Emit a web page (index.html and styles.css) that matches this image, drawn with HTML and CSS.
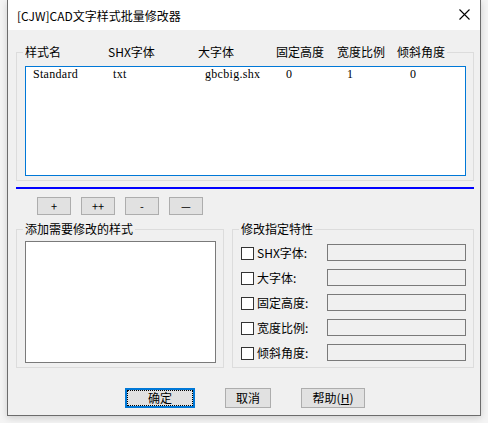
FILE: index.html
```html
<!DOCTYPE html>
<html lang="zh-CN">
<head>
<meta charset="utf-8">
<title>[CJW]CAD文字样式批量修改器</title>
<link rel="stylesheet" href="styles.css">
</head>
<body>
<div class="window">
  <div class="titlebar">
    <span class="title">[CJW]CAD文字样式批量修改器</span>
    <svg class="close" width="11" height="11" viewBox="0 0 11 11"><path d="M0.5 0.5L10.5 10.5M10.5 0.5L0.5 10.5" stroke="#000" stroke-width="1.1" fill="none"/></svg>
  </div>
  <div class="content">
    <fieldset class="group group-top">
      <legend class="legend legend-cols"><span class="h1">样式名</span><span class="h2">SHX字体</span><span class="h3">大字体</span><span class="h4">固定高度</span><span class="h5">宽度比例</span><span class="h6">倾斜角度</span></legend>
      <div class="listbox list-styles">
        <div class="row"><span>Standard</span><span>txt</span><span>gbcbig.shx</span><span>0</span><span>1</span><span>0</span></div>
      </div>
    </fieldset>
    <div class="divider"></div>
    <div class="tool-row">
      <button class="btn btn-small">+</button>
      <button class="btn btn-small">++</button>
      <button class="btn btn-small">-</button>
      <button class="btn btn-small">—</button>
    </div>
    <div class="lower">
      <fieldset class="group group-left">
        <legend class="legend">添加需要修改的样式</legend>
        <div class="listbox list-add"></div>
      </fieldset>
      <fieldset class="group group-right">
        <legend class="legend">修改指定特性</legend>
        <div class="prop-row"><span class="check"></span><span class="prop-label">SHX字体:</span><span class="field"></span></div>
        <div class="prop-row"><span class="check"></span><span class="prop-label">大字体:</span><span class="field"></span></div>
        <div class="prop-row"><span class="check"></span><span class="prop-label">固定高度:</span><span class="field"></span></div>
        <div class="prop-row"><span class="check"></span><span class="prop-label">宽度比例:</span><span class="field"></span></div>
        <div class="prop-row"><span class="check"></span><span class="prop-label">倾斜角度:</span><span class="field"></span></div>
      </fieldset>
    </div>
    <div class="actions">
      <button class="btn btn-default">确定</button>
      <button class="btn btn-cancel">取消</button>
      <button class="btn btn-help">帮助(<u>H</u>)</button>
    </div>
  </div>
</div>
</body>
</html>
```

FILE: styles.css
```css
* { box-sizing: border-box; }
html, body { margin: 0; padding: 0; }
body {
  background: #f4f4f4;
  width: 488px;
  height: 423px;
  overflow: hidden;
  font-family: "Noto Sans CJK SC", "Noto Sans", sans-serif;
  font-size: 12px;
  color: #000;
}
.window {
  margin-left: 7px;
  width: 474px;
  height: 416px;
  border: 1px solid #6c6c6c;
  border-top: none;
  background: #f0f0f0;
  box-shadow: 0 2px 7px rgba(0,0,0,0.16);
  display: flex;
  flex-direction: column;
}
.titlebar {
  height: 30px;
  background: #fff;
  display: flex;
  align-items: center;
  padding-left: 9px;
  padding-right: 10px;
}
.title {
  font-size: 12px;
  line-height: 16px;
  flex: 1;
  padding-top: 1px;
}
.close { display: block; margin-top: -1px; }
.content {
  padding: 14px 6px 0 8px;
  display: flex;
  flex-direction: column;
}
.group {
  margin: 0;
  min-width: 0;
  border: 1px solid #dcdcdc;
}
.legend {
  padding: 0 2px;
  margin-left: -2px;
  line-height: 16px;
  font-size: 12px;
}
.group-top { padding: 6px 7px 4px 8px; }
.legend-cols { display: flex; }
.legend-cols span { display: block; }
.h1 { width: 83px; }
.h2 { width: 90px; }
.h3 { width: 78px; }
.h4 { width: 61px; }
.h5 { width: 60px; }
.h6 { width: 48px; }
.listbox { background: #fff; }
.list-styles {
  height: 110px;
  border: 1px solid #0078d7;
  padding: 0 0 0 7px;
}
.row {
  display: grid;
  grid-template-columns: 80px 92px 81px 61px 63px auto;
  font-family: "Liberation Serif", "DejaVu Serif", serif;
  font-size: 12px;
  letter-spacing: 0.3px;
  line-height: 14px;
}
.divider {
  margin-top: 6px;
  height: 2px;
  background: #0000ff;
}
.tool-row {
  margin-top: 8px;
  padding-left: 21px;
  display: flex;
  gap: 10px;
}
.btn {
  margin: 0;
  padding: 0;
  background: #e1e1e1;
  border: 1px solid #adadad;
  font-family: "Noto Sans CJK SC", "Noto Sans", sans-serif;
  font-size: 12px;
  line-height: 16px;
  color: #000;
}
.btn-small { width: 34px; height: 18px; font-size: 11px; }
.lower {
  margin-top: 6px;
  display: flex;
  gap: 8px;
}
.group-left { width: 208px; padding: 4px 7px 4px 8px; }
.list-add {
  height: 122px;
  border: 1px solid #7a7a7a;
}
.group-right {
  width: 242px;
  padding: 7px 7px 5px 8px;
  display: flex;
  flex-direction: column;
  gap: 8px;
}
.prop-row {
  height: 17px;
  display: flex;
  align-items: center;
}
.check {
  width: 13px;
  height: 13px;
  border: 1px solid #333;
  background: #fff;
  margin-top: 1px;
}
.prop-label {
  margin-left: 3px;
  line-height: 16px;
}
.field {
  margin-left: auto;
  width: 139px;
  height: 17px;
  border: 1px solid #7a7a7a;
  background: #f0f0f0;
}
.actions {
  margin-top: 20px;
  padding-left: 109px;
  display: flex;
  gap: 30px;
}
.actions .btn { height: 20px; }
.btn-default {
  width: 70px;
  border: 2px solid #0078d7;
  outline: 1px dotted #000;
  outline-offset: -3px;
}
.btn-cancel { width: 46px; }
.btn-help { width: 64px; }
.btn-help u { text-decoration: underline; }
```
